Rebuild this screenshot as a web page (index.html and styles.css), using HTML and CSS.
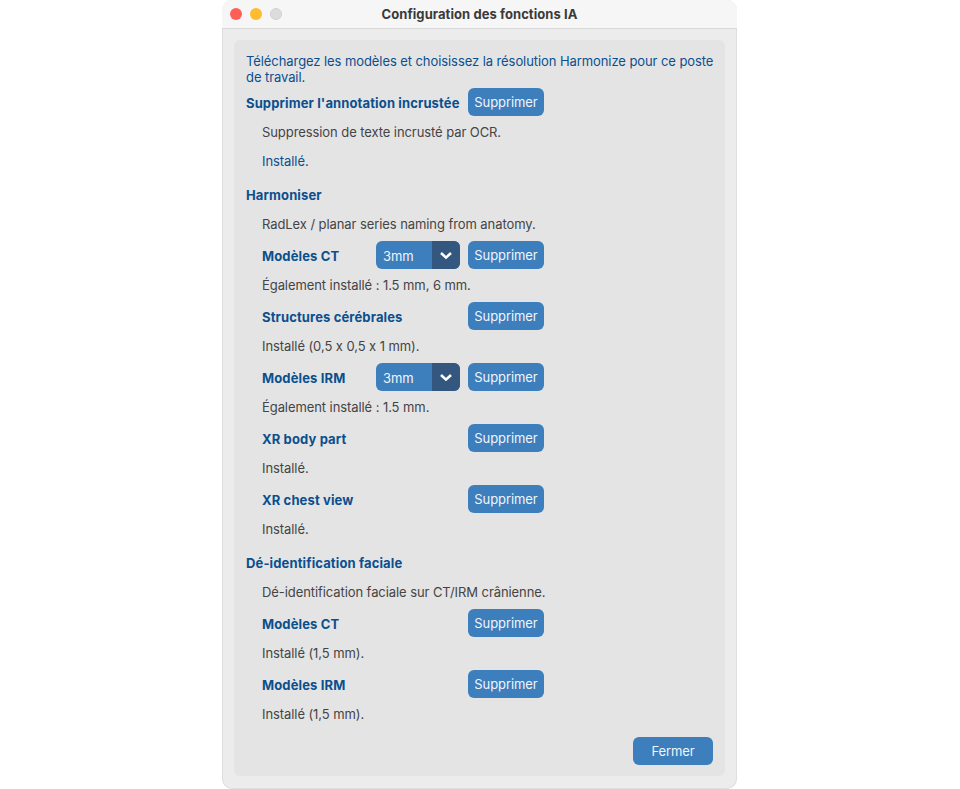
FILE: index.html
```html
<!DOCTYPE html>
<html lang="fr">
    <head>
        <title>Configuration des fonctions IA</title>
        <link rel="stylesheet" href="styles.css">
    </head>
    <body>
        <div class="window">
            <div class="titleBar">
                <div class="lights">
                    <span class="light red"></span>
                    <span class="light yellow"></span>
                    <span class="light grey"></span>
                </div>
                <div class="title">Configuration des fonctions IA</div>
            </div>
            <div class="panel">
                <p class="intro">Téléchargez les modèles et choisissez la résolution Harmonize pour ce poste de travail.</p>

                <div class="topRow">
                    <span class="heading firstHeading">Supprimer l'annotation incrustée</span>
                    <button class="btn">Supprimer</button>
                </div>
                <p class="note">Suppression de texte incrusté par OCR.</p>
                <p class="status">Installé.</p>

                <div class="heading section">Harmoniser</div>
                <p class="note">RadLex / planar series naming from anatomy.</p>
                <div class="row">
                    <span class="rowLabel">Modèles CT</span>
                    <div class="select"><span class="selectValue">3mm</span><span class="selectArrow"><svg width="14" height="9" viewBox="0 0 14 9"><path d="M2 2l5 4.6L12 2" fill="none" stroke="#fff" stroke-width="2.6"/></svg></span></div>
                    <button class="btn">Supprimer</button>
                </div>
                <p class="note">Également installé : 1.5 mm, 6 mm.</p>
                <div class="row">
                    <span class="rowLabel wide">Structures cérébrales</span>
                    <button class="btn">Supprimer</button>
                </div>
                <p class="note">Installé (0,5 x 0,5 x 1 mm).</p>
                <div class="row">
                    <span class="rowLabel">Modèles IRM</span>
                    <div class="select"><span class="selectValue">3mm</span><span class="selectArrow"><svg width="14" height="9" viewBox="0 0 14 9"><path d="M2 2l5 4.6L12 2" fill="none" stroke="#fff" stroke-width="2.6"/></svg></span></div>
                    <button class="btn">Supprimer</button>
                </div>
                <p class="note">Également installé : 1.5 mm.</p>
                <div class="row">
                    <span class="rowLabel wide">XR body part</span>
                    <button class="btn">Supprimer</button>
                </div>
                <p class="note">Installé.</p>
                <div class="row">
                    <span class="rowLabel wide">XR chest view</span>
                    <button class="btn">Supprimer</button>
                </div>
                <p class="note">Installé.</p>

                <div class="heading section">Dé-identification faciale</div>
                <p class="note">Dé-identification faciale sur CT/IRM crânienne.</p>
                <div class="row">
                    <span class="rowLabel wide">Modèles CT</span>
                    <button class="btn">Supprimer</button>
                </div>
                <p class="note">Installé (1,5 mm).</p>
                <div class="row">
                    <span class="rowLabel wide">Modèles IRM</span>
                    <button class="btn">Supprimer</button>
                </div>
                <p class="note">Installé (1,5 mm).</p>

                <div class="footer">
                    <button class="btn closeBtn">Fermer</button>
                </div>
            </div>
        </div>
    </body>
</html>
```
FILE: styles.css
```css
*{
    box-sizing: border-box;
}

html, body{
    margin: 0;
    padding: 0;
    background-color: #ffffff;
    overflow: hidden;
}

body{
    font-family: "Inter", "Liberation Sans", sans-serif;
    font-size: 13px;
    font-feature-settings: "calt" 0;
    letter-spacing: -0.08px;
    height: 789px;
    padding-left: 222px;
}

.window{
    width: 515px;
    height: 789px;
    background-color: #ececec;
    border-radius: 10px;
    box-shadow: inset 0 0 0 1px rgba(0, 0, 0, 0.06);
}

.titleBar{
    display: flex;
    align-items: center;
    position: relative;
    height: 29px;
    background-color: #f6f6f6;
    border-bottom: 1px solid #d9d9d9;
    border-radius: 10px 10px 0 0;
}

.lights{
    display: flex;
    gap: 8px;
    padding-left: 8px;
}

.light{
    width: 12px;
    height: 12px;
    border-radius: 50%;
}

.red{
    background-color: #ff5f57;
}

.yellow{
    background-color: #febc2e;
}

.grey{
    background-color: #dcdcdc;
    border: 1px solid #d2d2d2;
}

.title{
    position: absolute;
    left: 0;
    right: 0;
    text-align: center;
    font-weight: 700;
    letter-spacing: 0.07px;
    color: #3a3a3a;
}

.panel{
    margin: 11px 12px 0;
    height: 736px;
    padding: 13px 12px 0;
    background-color: #e4e4e4;
    border-radius: 6px;
}

p{
    margin: 0;
}

.intro{
    line-height: 16px;
    color: #0b4f8e;
    margin-right: -6px;
    margin-bottom: 3px;
}

.topRow, .row{
    display: flex;
    align-items: center;
    height: 28px;
}

.row{
    padding-left: 16px;
}

.heading, .rowLabel{
    font-weight: 700;
    letter-spacing: 0.13px;
    color: #0b4f8e;
}

.firstHeading{
    width: 222px;
    padding-top: 2px;
}

.rowLabel{
    width: 114px;
    padding-top: 2px;
}

.rowLabel.wide{
    width: 206px;
}

.section{
    height: 25px;
    line-height: 24px;
    margin-top: 5px;
}

.note{
    padding: 8px 0 8px 16px;
    line-height: 17px;
    color: #444444;
}

.status{
    padding: 4px 0 8px 16px;
    line-height: 17px;
    color: #0b4f8e;
}

.btn{
    width: 76px;
    height: 28px;
    padding: 0;
    border: none;
    border-radius: 6px;
    background-color: #3d7ebd;
    color: #f0f5fa;
    font-family: inherit;
    font-size: 13px;
    font-feature-settings: inherit;
    letter-spacing: -0.08px;
}

.select{
    display: flex;
    width: 84px;
    height: 28px;
    margin-right: 8px;
    border-radius: 6px;
    overflow: hidden;
    background-color: #3d7ebd;
    color: #f0f5fa;
}

.selectValue{
    flex: 1;
    padding-left: 7px;
    line-height: 30px;
}

.selectArrow{
    display: flex;
    align-items: center;
    justify-content: center;
    width: 28px;
    background-color: #34577f;
}

.footer{
    display: flex;
    justify-content: flex-end;
    margin-top: 6px;
}

.closeBtn{
    width: 80px;
}
```
